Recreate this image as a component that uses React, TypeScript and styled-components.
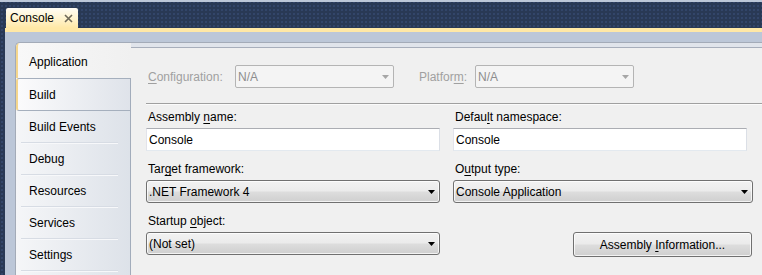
import styled, {createGlobalStyle} from 'styled-components'

const GlobalStyle = createGlobalStyle`
  html, body {
    margin: 0;
    padding: 0;
  }
  body {
    font-family: "Liberation Sans", Arial, sans-serif;
    font-size: 12px;
    color: #1e1e1e;
    background: #293955;
  }
`

const Window = styled.div`
  width: 762px;
  height: 275px;
  overflow: hidden;
  display: flex;
  flex-direction: column;
  background-color: #293955;
  background-image: radial-gradient(circle, #33466a 0.7px, transparent 1px);
  background-size: 4px 4px;
`

const TopStrip = styled.div`
  flex: none;
  height: 2px;
  background: #bcc7d8;
`

const TabStrip = styled.div`
  flex: none;
  height: 26px;
  display: flex;
  align-items: flex-end;
  padding-left: 6px;
`

const DocTab = styled.div`
  box-sizing: border-box;
  width: 72px;
  height: 20px;
  display: flex;
  align-items: center;
  justify-content: space-between;
  padding: 0 5px 0 4px;
  border-radius: 2px 2px 0 0;
  background: linear-gradient(#fffcf4, #fff3cd 55%, #ffe8a6);
  color: #000;
`

const DocFrame = styled.div`
  flex: 1;
  display: flex;
  margin-left: 5px;
  border-top: 4px solid #ffe8a6;
  background: #bcc7d8;
  padding: 10px 0 0 10px;
`

const Panel = styled.div`
  flex: 1;
  display: flex;
  border-top: 1px solid #a3abb8;
  border-left: 1px solid #a3abb8;
  border-top-left-radius: 5px;
  background: #f0f0f0;
  overflow: hidden;
`

const Sidebar = styled.div`
  flex: none;
  width: 115px;
  display: flex;
  flex-direction: column;
`

const ActiveTab = styled.div`
  flex: none;
  box-sizing: border-box;
  height: 35px;
  width: 116px;
  display: flex;
  align-items: center;
  padding: 3px 0 0 11px;
  border-left: 2px solid #f4d68c;
  border-top-left-radius: 4px;
  background: linear-gradient(90deg, #f8f8f8, #f0f0f0);
  color: #000;
`

const TabList = styled.div`
  flex: 1;
  display: flex;
  flex-direction: column;
  border-right: 1px solid #a2acbb;
  background: linear-gradient(90deg, #f5f6f8, #dde2e9);
`

const HotTab = styled.div`
  box-sizing: border-box;
  height: 33px;
  display: flex;
  align-items: center;
  padding-left: 11px;
  border-top: 1px solid #a5afbd;
  border-bottom: 1px solid #a5afbd;
  border-left: 2px solid #f4d68c;
  border-radius: 3px 0 0 3px;
  background: linear-gradient(90deg, #fbfbfc, #dfe3ea);
  color: #000;
`

const TabItem = styled.div`
  position: relative;
  box-sizing: border-box;
  height: 32px;
  display: flex;
  align-items: center;
  padding-left: 13px;
  color: #000;

  &::after {
    content: '';
    position: absolute;
    left: 5px;
    right: 12px;
    bottom: 0;
    height: 1px;
    background: #d7dce4;
    box-shadow: 0 1px 0 #f7f8fa;
  }
`

const Content = styled.div`
  flex: 1;
  display: flex;
  flex-direction: column;
`

const ContentBand = styled.div`
  flex: none;
  height: 4px;
  background: #e0e4eb;
`

const ContentBody = styled.div`
  flex: 1;
  border-top: 1px solid #a7aebb;
  background: #f0f0f0;
  padding: 17px 0 0 15px;
`

const ConfigRow = styled.div`
  display: flex;
  align-items: center;
  height: 23px;
`

const ConfigLabel = styled.span<{$width: number; $gap?: number}>`
  flex: none;
  box-sizing: border-box;
  width: ${({$width}) => $width}px;
  margin-left: ${({$gap}) => $gap ?? 0}px;
  padding-left: 2px;
  color: #a0a0a0;
`

const Separator = styled.div`
  height: 1px;
  margin-top: 15px;
  background: #a0a0a0;
  box-shadow: 0 1px 0 #fbfbfb;
`

const FieldGrid = styled.div`
  display: grid;
  grid-template-columns: 294px 300px;
  column-gap: 13px;
  row-gap: 11px;
  margin-top: 6px;
`

const Field = styled.div`
  display: flex;
  flex-direction: column;
`

const Label = styled.label`
  height: 15px;
  line-height: 15px;
  margin-bottom: 3px;
  padding-left: 2px;
  color: #000;
`

const Key = styled.span`
  text-decoration: underline;
  text-underline-offset: 2px;
`

const TextBox = styled.div<{$width?: number}>`
  box-sizing: border-box;
  height: 23px;
  width: ${({$width}) => ($width ? `${$width}px` : '100%')};
  display: flex;
  align-items: center;
  padding-left: 2px;
  border: 1px solid;
  border-color: #abadb3 #dbdfe6 #e3e9ef #e2e3ea;
  background: #fff;
  color: #000;
`

const Combo = styled.div<{$disabled?: boolean; $width?: number}>`
  box-sizing: border-box;
  height: 23px;
  width: ${({$width}) => ($width ? `${$width}px` : '100%')};
  display: flex;
  align-items: center;
  padding: 0 4px 0 2px;
  border: 1px solid ${({$disabled}) => ($disabled ? '#b4b4b4' : '#707070')};
  border-radius: ${({$disabled}) => ($disabled ? '2px' : '3px')};
  background: ${({$disabled}) =>
    $disabled ? '#f4f4f4' : 'linear-gradient(#f2f2f2 0%, #ebebeb 48%, #dddddd 52%, #cfcfcf 100%)'};
  box-shadow: ${({$disabled}) => ($disabled ? 'none' : 'inset 0 0 0 1px rgba(255,255,255,0.75)')};
  color: ${({$disabled}) => ($disabled ? '#8d8d8d' : '#000')};
`

const ComboText = styled.span`
  flex: 1;
  white-space: nowrap;
`

const ButtonCell = styled.div`
  display: flex;
  justify-content: flex-end;
  padding: 18px 1px 0 0;
`

const PushButton = styled.button`
  box-sizing: border-box;
  width: 179px;
  height: 25px;
  padding: 0;
  border: 1px solid #707070;
  border-radius: 3px;
  background: linear-gradient(#f2f2f2 0%, #ebebeb 48%, #dddddd 52%, #cfcfcf 100%);
  box-shadow: inset 0 0 0 1px rgba(255, 255, 255, 0.75);
  font-family: inherit;
  font-size: 12px;
  color: #000;
`

const Arrow = ({disabled}: {disabled?: boolean}) => (
  <svg width="7" height="4" viewBox="0 0 7 4">
    <path d="M0 0h7L3.5 4z" fill={disabled ? '#a6a6a6' : '#000'} />
  </svg>
)

const CloseIcon = () => (
  <svg width="9" height="9" viewBox="0 0 9 9">
    <path d="M1 1l7 7M8 1L1 8" stroke="#6e6858" strokeWidth="1.6" />
  </svg>
)

const tabs = ['Build Events', 'Debug', 'Resources', 'Services', 'Settings']

export default function App() {
  return (
    <>
      <GlobalStyle />
      <Window>
        <TopStrip />
        <TabStrip>
          <DocTab>
            <span>Console</span>
            <CloseIcon />
          </DocTab>
        </TabStrip>
        <DocFrame>
          <Panel>
            <Sidebar>
              <ActiveTab>Application</ActiveTab>
              <TabList>
                <HotTab>Build</HotTab>
                {tabs.map((t) => (
                  <TabItem key={t}>{t}</TabItem>
                ))}
              </TabList>
            </Sidebar>
            <Content>
              <ContentBand />
              <ContentBody>
                <ConfigRow>
                  <ConfigLabel $width={89}>
                    <Key>C</Key>onfiguration:
                  </ConfigLabel>
                  <Combo $disabled $width={159}>
                    <ComboText>N/A</ComboText>
                    <Arrow disabled />
                  </Combo>
                  <ConfigLabel $width={58} $gap={23}>
                    Platfor<Key>m</Key>:
                  </ConfigLabel>
                  <Combo $disabled $width={159}>
                    <ComboText>N/A</ComboText>
                    <Arrow disabled />
                  </Combo>
                </ConfigRow>
                <Separator />
                <FieldGrid>
                  <Field>
                    <Label>
                      Assembly <Key>n</Key>ame:
                    </Label>
                    <TextBox>Console</TextBox>
                  </Field>
                  <Field>
                    <Label>
                      Defau<Key>l</Key>t namespace:
                    </Label>
                    <TextBox $width={294}>Console</TextBox>
                  </Field>
                  <Field>
                    <Label>
                      Tar<Key>g</Key>et framework:
                    </Label>
                    <Combo>
                      <ComboText>.NET Framework 4</ComboText>
                      <Arrow />
                    </Combo>
                  </Field>
                  <Field>
                    <Label>
                      O<Key>u</Key>tput type:
                    </Label>
                    <Combo>
                      <ComboText>Console Application</ComboText>
                      <Arrow />
                    </Combo>
                  </Field>
                  <Field>
                    <Label>
                      Startup <Key>o</Key>bject:
                    </Label>
                    <Combo>
                      <ComboText>(Not set)</ComboText>
                      <Arrow />
                    </Combo>
                  </Field>
                  <ButtonCell>
                    <PushButton>
                      Assembly <Key>I</Key>nformation...
                    </PushButton>
                  </ButtonCell>
                </FieldGrid>
              </ContentBody>
            </Content>
          </Panel>
        </DocFrame>
      </Window>
    </>
  )
}
